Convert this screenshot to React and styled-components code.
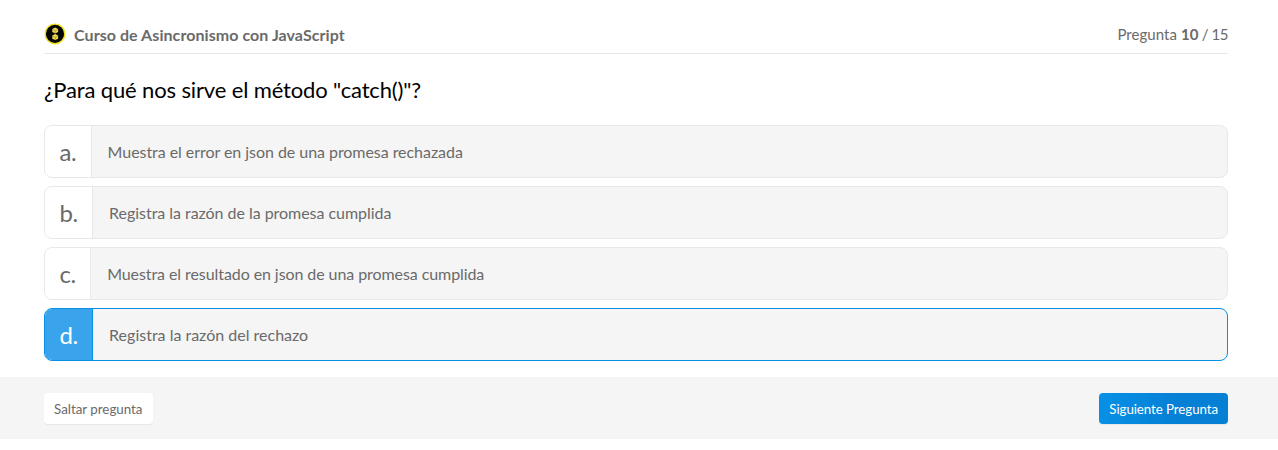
import React from "react";
import styled, { createGlobalStyle } from "styled-components";

const Global = createGlobalStyle`
  *{box-sizing:border-box}
  body{margin:0;background:#fff;font-family:Lato,"Liberation Sans",sans-serif;color:#666}
`;
const Page = styled.main`display:flex;flex-direction:column;`;
const Content = styled.section`padding:20px 50px 16px 44px;`;
const Header = styled.header`
  display:flex;justify-content:space-between;align-items:flex-start;
  height:34px;padding-top:3px;border-bottom:1px solid #e8e8e8;
`;
const Course = styled.div`display:flex;align-items:flex-start;gap:8px;`;
const Badge = styled.svg`width:22px;height:22px;flex:none;`;
const CourseName = styled.strong`
  font-size:16px;line-height:22px;color:#6a6a6a;font-weight:700;letter-spacing:0.065px;padding-top:1px;
`;
const Progress = styled.span`
  font-size:15px;line-height:22px;color:#6a6a6a;letter-spacing:-0.45px;
`;
const ProgressLabel = styled.span`letter-spacing:0.06px;`;
const Current = styled.b`letter-spacing:0;`;
const Question = styled.h1`
  margin:21px 0 20px;font-size:22px;line-height:30px;font-weight:400;color:#000;letter-spacing:-0.14px;
`;
const Options = styled.div`display:flex;flex-direction:column;gap:8px;`;
const Option = styled.div`
  display:flex;height:53px;border-radius:8px;overflow:hidden;background:#f5f5f5;
  border:1px solid ${p => (p.$selected ? "#0791e6" : "#e8e8e8")};
`;
const Letter = styled.span`
  display:flex;align-items:center;padding:0 14.5px;font-size:24px;letter-spacing:-0.5px;
  border-right:1px solid ${p => (p.$selected ? "#0791e6" : "#e8e8e8")};
  background:${p => (p.$selected ? "#39a4eb" : "#fff")};color:${p => (p.$selected ? "#fff" : "#6a6a6a")};
`;
const Answer = styled.span`
  display:flex;align-items:center;padding:0 16px;font-size:16px;color:#6a6a6a;
  letter-spacing:${p => p.$tracking}px;
`;
const Footer = styled.footer`
  height:62px;padding:0 50px 0 44px;display:flex;align-items:center;justify-content:space-between;background:#f5f5f5;
`;
const Button = styled.button`
  height:31px;border:0;border-radius:4px;padding:1px 10px 0;font:400 13.333px Lato,sans-serif;
  letter-spacing:${p => (p.$primary ? "-0.08px" : "0")};
  background:${p => (p.$primary ? "linear-gradient(90deg,#0791e6,#0580d5 60%)" : "#fff")};
  color:${p => (p.$primary ? "#fff" : "#6a6a6a")};
  box-shadow:0 1px 1px rgba(0,0,0,.06);
`;
const options = [
  { letter: "a.", text: "Muestra el error en json de una promesa rechazada", tracking: -0.05 },
  { letter: "b.", text: "Registra la razón de la promesa cumplida", tracking: -0.04 },
  { letter: "c.", text: "Muestra el resultado en json de una promesa cumplida", tracking: -0.08 },
  { letter: "d.", text: "Registra la razón del rechazo", tracking: 0 },
];

function Cube({ y }) {
  return (
    <g transform={`translate(11.2 ${y})`}>
      <path d="M0-3 2.9-1.6V1.6L0 3-2.9 1.6V-1.6Z" fill="#edd94f" />
      <path d="M-2.8-1.2 0 .2 2.8-1.2M0 .2V3" fill="none" stroke="#6d6115" strokeWidth=".4" />
    </g>
  );
}

export default function App() {
  return (
    <Page>
      <Global />
      <Content>
        <Header>
          <Course>
            <Badge viewBox="0 0 22 22">
              <circle cx="11" cy="10.9" r="9.8" fill="#050505" stroke="#f0df1e" strokeWidth="1.4" />
              <Cube y={7.5} />
              <Cube y={14.1} />
            </Badge>
            <CourseName>Curso de Asincronismo con JavaScript</CourseName>
          </Course>
          <Progress>
            <ProgressLabel>Pregunta </ProgressLabel>
            <Current>10</Current> / 15
          </Progress>
        </Header>
        <Question>¿Para qué nos sirve el método "catch()"?</Question>
        <Options>
          {options.map(({ letter, text, tracking }, i) => (
            <Option key={letter} $selected={i === 3}>
              <Letter $selected={i === 3}>{letter}</Letter>
              <Answer $tracking={tracking}>{text}</Answer>
            </Option>
          ))}
        </Options>
      </Content>
      <Footer>
        <Button>Saltar pregunta</Button>
        <Button $primary>Siguiente Pregunta</Button>
      </Footer>
    </Page>
  );
}
